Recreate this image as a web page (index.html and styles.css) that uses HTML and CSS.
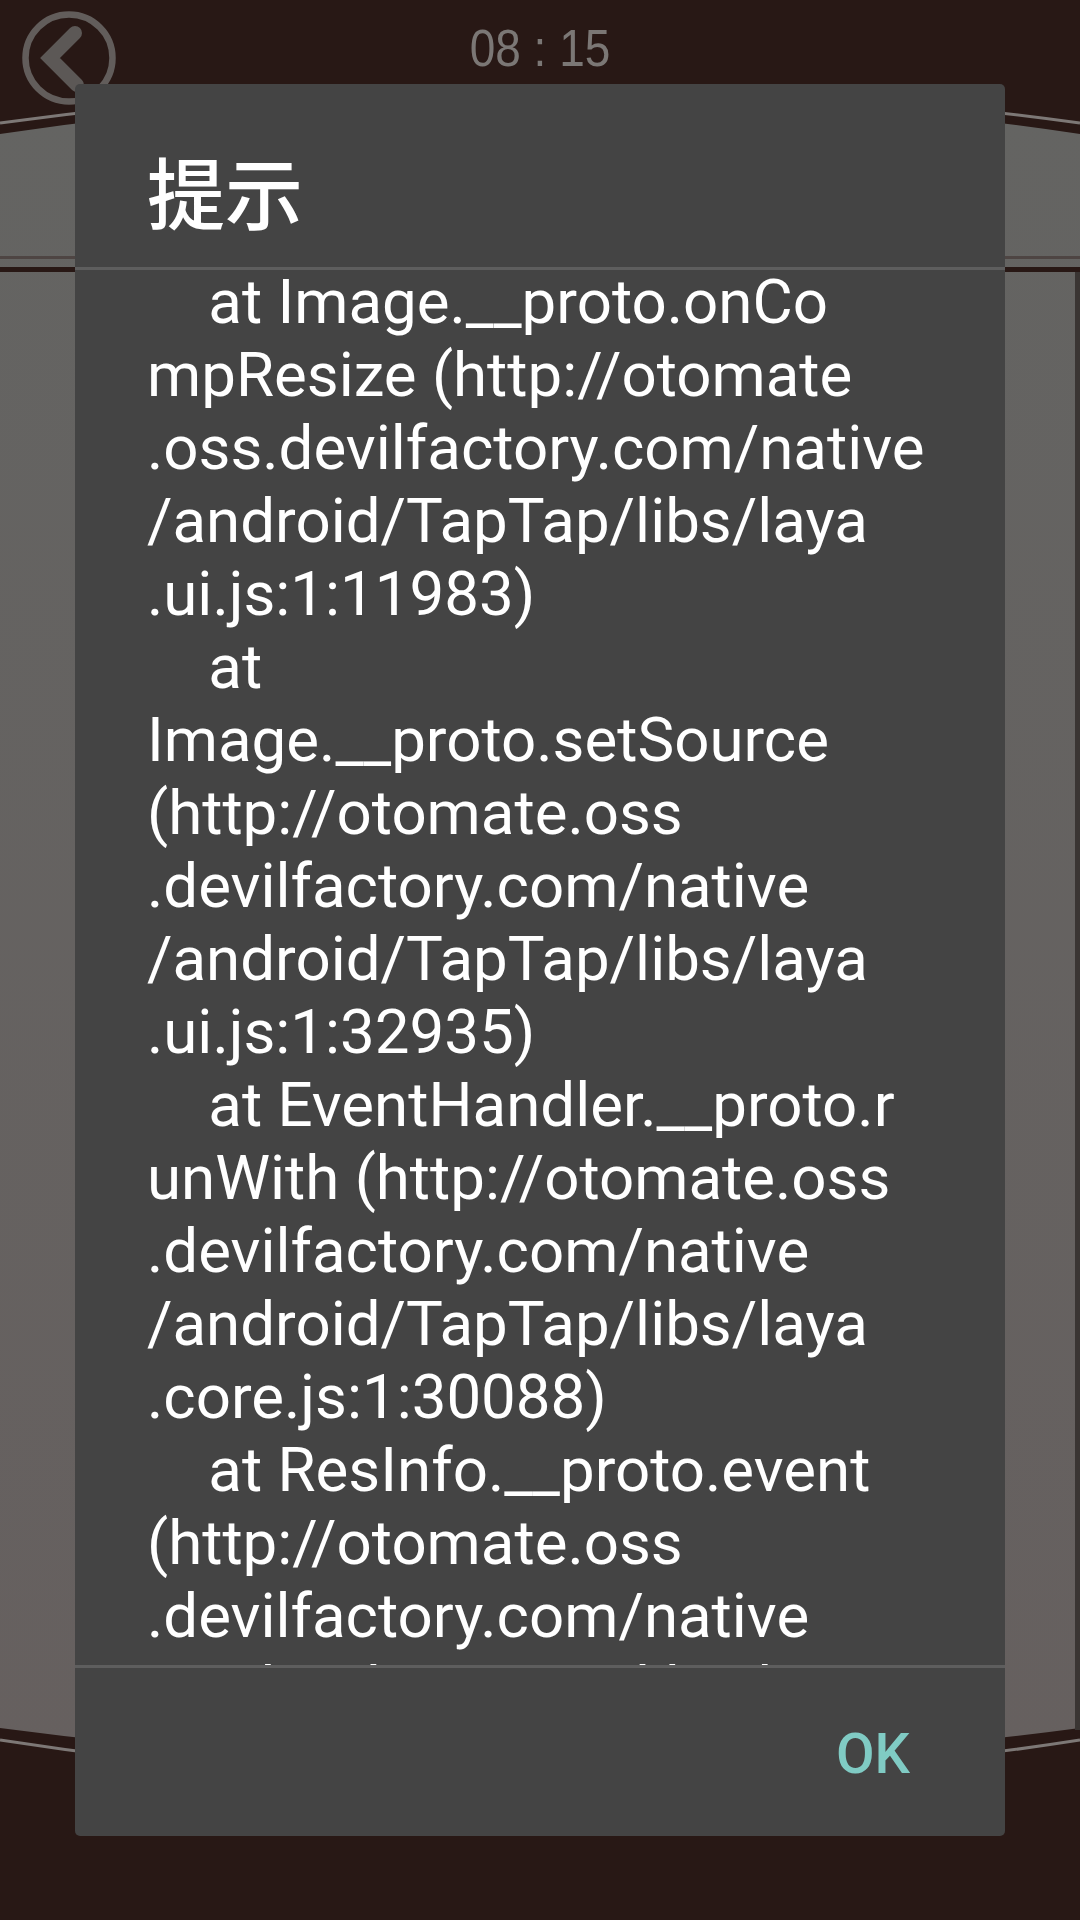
FILE: index.html
```html
<!DOCTYPE html>
<html lang="zh">
<head>
<meta charset="utf-8">
<title>提示</title>
<link rel="stylesheet" href="styles.css">
</head>
<body>
<div class="screen">
  <svg class="backdrop" viewBox="0 0 1080 1920" width="1080" height="1920">
    <defs>
      <linearGradient id="panelFill" x1="0" y1="0" x2="0" y2="1">
        <stop offset="0" stop-color="#646462"/>
        <stop offset="1" stop-color="#66605f"/>
      </linearGradient>
    </defs>
    <path d="M0 134Q540 54 1080 134V1728Q540 1800 0 1728Z" fill="url(#panelFill)"/>
    <path d="M0 123Q540 49 1080 123" fill="none" stroke="#7d7876" stroke-width="3"/>
    <path d="M0 1740Q540 1824 1080 1740" fill="none" stroke="#7d7876" stroke-width="3"/>
    <rect x="0" y="256" width="1080" height="3" fill="#4e4543"/>
    <rect x="0" y="267" width="1080" height="5" fill="#281815"/>
    <rect x="1075" y="272" width="5" height="1458" fill="#3a3533"/>
  </svg>

  <header class="topbar">
    <svg class="back" viewBox="0 0 94 94" width="94" height="94">
      <circle cx="47" cy="47" r="43.5" fill="none" stroke="#625d5b" stroke-width="6.5"/>
      <path d="M53 22L28 47L55 74" fill="none" stroke="#5c5856" stroke-width="14" stroke-linecap="round"/>
    </svg>
    <span class="time">08 : 15</span>
    <span class="spacer"></span>
  </header>

  <div class="overlay">
    <section class="dialog">
      <h1 class="title">提示</h1>
      <div class="body"><pre class="log">    at Image.__proto.onCo
mpResize (http://otomate
.oss.devilfactory.com/native
/android/TapTap/libs/laya
.ui.js:1:11983)
    at
Image.__proto.setSource
(http://otomate.oss
.devilfactory.com/native
/android/TapTap/libs/laya
.ui.js:1:32935)
    at EventHandler.__proto.r
unWith (http://otomate.oss
.devilfactory.com/native
/android/TapTap/libs/laya
.core.js:1:30088)
    at ResInfo.__proto.event
(http://otomate.oss
.devilfactory.com/native
/android/TapTap/libs/laya</pre></div>
      <footer class="actions"><span class="ok">OK</span></footer>
    </section>
  </div>
</div>
</body>
</html>
```

FILE: styles.css
```css
* { box-sizing: border-box; }
html, body { margin: 0; padding: 0; }
body { width: 1080px; height: 1920px; overflow: hidden; background: #281815; }

.screen {
  position: relative;
  width: 1080px;
  height: 1920px;
  overflow: hidden;
  background: #281815;
  font-family: Roboto, "Noto Sans CJK SC", sans-serif;
}
.backdrop { position: absolute; inset: 0; display: block; }

.topbar {
  position: relative;
  display: grid;
  grid-template-columns: 1fr auto 1fr;
  align-items: start;
  padding: 11px 22px 0;
}
.back { display: block; }
.time {
  font-family: "Liberation Sans", Arial, sans-serif;
  font-size: 46px;
  line-height: 74px;
  color: #7b7775;
  transform: scaleY(1.13);
  white-space: pre;
}

.overlay {
  position: absolute;
  inset: 0;
  display: flex;
  flex-direction: column;
  padding: 84px 75px;
}
.dialog {
  flex: 1;
  display: flex;
  flex-direction: column;
  min-height: 0;
  background: #444444;
  border-radius: 5px;
  color: #fff;
  overflow: hidden;
}
.title {
  margin: 0;
  height: 186px;
  padding: 61px 72px 0;
  font-family: "Noto Sans CJK SC", sans-serif;
  font-size: 78px;
  line-height: 90px;
  font-weight: 500;
  border-bottom: 3px solid #5e5e5e;
}
.body {
  flex: 1;
  min-height: 0;
  overflow: hidden;
  padding: 0 72px;
}
.log {
  margin: -4px 0 0;
  font-family: Roboto, sans-serif;
  font-size: 61.8px;
  line-height: 73px;
  white-space: pre;
}
.actions {
  height: 171px;
  flex: none;
  display: flex;
  justify-content: flex-end;
  align-items: center;
  padding: 4px 95px 0 0;
  border-top: 3px solid #5e5e5e;
}
.ok {
  font-size: 56px;
  font-weight: 500;
  line-height: 1;
  color: #80cbc4;
}
.spacer { display: block; }
```
